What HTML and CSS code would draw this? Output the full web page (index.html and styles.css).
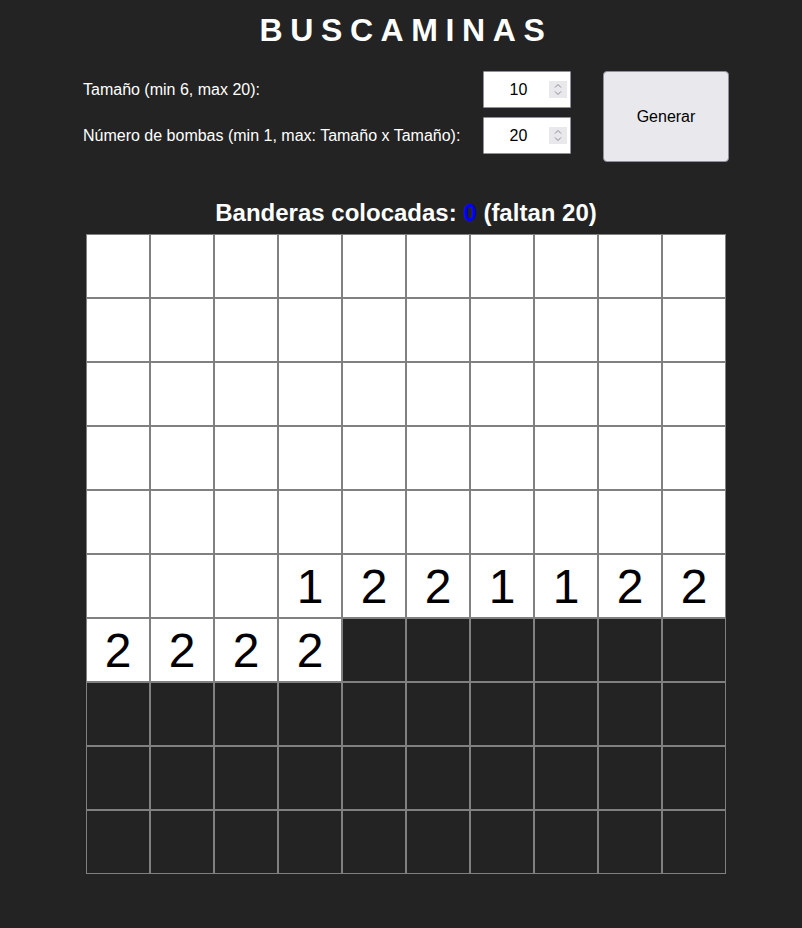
FILE: index.html
```html
<!DOCTYPE html>
<html lang="es">
<head>
<meta charset="utf-8">
<title>Buscaminas</title>
<link rel="stylesheet" href="styles.css">
</head>
<body>
<h1 class="title">BUSCAMINAS</h1>
<div class="controls">
  <div class="fields">
    <label class="label" for="size">Tamaño (min 6, max 20):</label>
    <div class="num">
      <input class="num-input" id="size" type="text" value="10">
      <span class="spin"><svg width="10" height="13" viewBox="0 0 10 13"><path d="M2 4.5 L5 1.5 L8 4.5 M2 8.5 L5 11.5 L8 8.5" fill="none" stroke="#8a8a8a" stroke-width="1"/></svg></span>
    </div>
    <label class="label" for="bombs">Número de bombas (min 1, max: Tamaño x Tamaño):</label>
    <div class="num">
      <input class="num-input" id="bombs" type="text" value="20">
      <span class="spin"><svg width="10" height="13" viewBox="0 0 10 13"><path d="M2 4.5 L5 1.5 L8 4.5 M2 8.5 L5 11.5 L8 8.5" fill="none" stroke="#8a8a8a" stroke-width="1"/></svg></span>
    </div>
  </div>
  <button class="gen" type="button">Generar</button>
</div>
<h2 class="flags">Banderas colocadas: <span class="count">0</span> (faltan 20)</h2>
<div class="board">
  <div class="cell open"></div><div class="cell open"></div><div class="cell open"></div><div class="cell open"></div><div class="cell open"></div><div class="cell open"></div><div class="cell open"></div><div class="cell open"></div><div class="cell open"></div><div class="cell open"></div>
  <div class="cell open"></div><div class="cell open"></div><div class="cell open"></div><div class="cell open"></div><div class="cell open"></div><div class="cell open"></div><div class="cell open"></div><div class="cell open"></div><div class="cell open"></div><div class="cell open"></div>
  <div class="cell open"></div><div class="cell open"></div><div class="cell open"></div><div class="cell open"></div><div class="cell open"></div><div class="cell open"></div><div class="cell open"></div><div class="cell open"></div><div class="cell open"></div><div class="cell open"></div>
  <div class="cell open"></div><div class="cell open"></div><div class="cell open"></div><div class="cell open"></div><div class="cell open"></div><div class="cell open"></div><div class="cell open"></div><div class="cell open"></div><div class="cell open"></div><div class="cell open"></div>
  <div class="cell open"></div><div class="cell open"></div><div class="cell open"></div><div class="cell open"></div><div class="cell open"></div><div class="cell open"></div><div class="cell open"></div><div class="cell open"></div><div class="cell open"></div><div class="cell open"></div>
  <div class="cell open"></div><div class="cell open"></div><div class="cell open"></div><div class="cell open">1</div><div class="cell open">2</div><div class="cell open">2</div><div class="cell open">1</div><div class="cell open">1</div><div class="cell open">2</div><div class="cell open">2</div>
  <div class="cell open">2</div><div class="cell open">2</div><div class="cell open">2</div><div class="cell open">2</div><div class="cell"></div><div class="cell"></div><div class="cell"></div><div class="cell"></div><div class="cell"></div><div class="cell"></div>
  <div class="cell"></div><div class="cell"></div><div class="cell"></div><div class="cell"></div><div class="cell"></div><div class="cell"></div><div class="cell"></div><div class="cell"></div><div class="cell"></div><div class="cell"></div>
  <div class="cell"></div><div class="cell"></div><div class="cell"></div><div class="cell"></div><div class="cell"></div><div class="cell"></div><div class="cell"></div><div class="cell"></div><div class="cell"></div><div class="cell"></div>
  <div class="cell"></div><div class="cell"></div><div class="cell"></div><div class="cell"></div><div class="cell"></div><div class="cell"></div><div class="cell"></div><div class="cell"></div><div class="cell"></div><div class="cell"></div>
</div>
</body>
</html>
```

FILE: styles.css
```css
html, body {
  background: #232323;
}
body {
  margin: 0 0 0 10px;
  color: #ffffff;
  font-family: "Liberation Sans", Arial, sans-serif;
  font-size: 16px;
}
.title {
  margin: 0;
  padding-top: 12px;
  text-align: center;
  font-size: 32px;
  line-height: 37px;
  font-weight: bold;
  letter-spacing: 7.6px;
}
.controls {
  width: 646px;
  margin: 22px auto 0;
  display: flex;
  align-items: flex-start;
  justify-content: space-between;
}
.fields {
  display: grid;
  grid-template-columns: 400px 88px;
  row-gap: 9px;
  align-items: center;
}
.label {
  line-height: 18px;
}
.num {
  box-sizing: border-box;
  height: 37px;
  display: flex;
  align-items: center;
  background: #ffffff;
  border: 1px solid #8f8f9d;
  border-radius: 1px;
  padding-right: 3px;
}
.num-input {
  flex: 1;
  min-width: 0;
  border: 0;
  outline: none;
  background: transparent;
  text-align: center;
  font-family: "Liberation Sans", Arial, sans-serif;
  font-size: 16px;
  color: #000000;
  padding: 0 0 0 4px;
}
.spin {
  width: 18px;
  height: 17px;
  background: #e9e9ed;
  display: flex;
  align-items: center;
  justify-content: center;
}
.gen {
  width: 126px;
  height: 91px;
  background: #e9e9ed;
  border: 1px solid #8f8f9d;
  border-radius: 4px;
  color: #000000;
  font-family: "Liberation Sans", Arial, sans-serif;
  font-size: 16px;
  padding: 0;
}
.flags {
  margin: 37px 0 7px;
  text-align: center;
  font-size: 24px;
  line-height: 28px;
  font-weight: bold;
}
.count {
  color: #0000ff;
}
.board {
  width: 640px;
  margin: 0 auto;
  display: grid;
  grid-template-columns: repeat(10, 64px);
  grid-auto-rows: 64px;
}
.cell {
  box-sizing: border-box;
  border: 1px solid #808080;
  background: #232323;
  display: flex;
  align-items: center;
  justify-content: center;
  font-size: 48px;
  color: #000000;
}
.cell.open {
  background: #ffffff;
}
```
